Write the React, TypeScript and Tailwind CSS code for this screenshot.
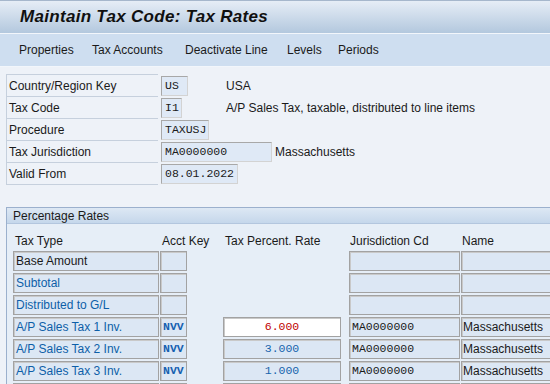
import React from 'react';

type Rate = {
  type: string;
  dark?: boolean;
  key?: string;
  rate?: string;
  current?: boolean;
  jur?: string;
  name?: string;
  hasRate?: boolean;
};

const rates: Rate[] = [
  { type: 'Base Amount', dark: true },
  { type: 'Subtotal' },
  { type: 'Distributed to G/L' },
  { type: 'A/P Sales Tax 1 Inv.', key: 'NVV', rate: '6.000', current: true, jur: 'MA0000000', name: 'Massachusetts', hasRate: true },
  { type: 'A/P Sales Tax 2 Inv.', key: 'NVV', rate: '3.000', jur: 'MA0000000', name: 'Massachusetts', hasRate: true },
  { type: 'A/P Sales Tax 3 Inv.', key: 'NVV', rate: '1.000', jur: 'MA0000000', name: 'Massachusetts', hasRate: true },
  // next row only peeks in at the bottom edge
  { type: '', hasRate: true },
];

const header = [
  { label: 'Country/Region Key', value: 'US', w: 'w-[27px]', text: 'USA' },
  { label: 'Tax Code', value: 'I1', w: 'w-[21px]', text: 'A/P Sales Tax, taxable, distributed to line items' },
  { label: 'Procedure', value: 'TAXUSJ', w: 'w-[48px]' },
  { label: 'Tax Jurisdiction', value: 'MA0000000', w: 'w-[111px]', text: 'Massachusetts', near: true },
  { label: 'Valid From', value: '08.01.2022', w: 'w-[77px]' },
];

const menu = [
  { t: 'Properties', w: 'w-[73px]' },
  { t: 'Tax Accounts', w: 'w-[93px]' },
  { t: 'Deactivate Line', w: 'w-[102px]' },
  { t: 'Levels', w: 'w-[51px]' },
  { t: 'Periods', w: '' },
];

const mono = "font-['Liberation_Mono','Courier_New',monospace] text-[11.5px]";
const cell = 'shrink-0 h-[20px] border border-[#a2a2a2] shadow-[inset_1px_1px_0_#c9c9c9] bg-[#dce7f4] flex items-center';

const App = () => {
  return (
    <div className="w-[550px] h-[384px] overflow-hidden bg-[#eef2f8] font-['Liberation_Sans',Arial,sans-serif] text-[12px] text-[#1a1a1a]">
      <div className="h-[33px] border-t border-[#a6b7cc] bg-gradient-to-b from-[#e6edf6] to-[#b3c8de] pl-[20px] flex items-center">
        <h1 className="text-[17px] font-bold italic text-[#101010] tracking-[0.3px]">Maintain Tax Code: Tax Rates</h1>
      </div>

      <div className="h-[34px] border-t border-[#f2f6fb] border-b border-[#a9b7c8] bg-[#cedef0] pl-[19px] flex items-center">
        {menu.map(m => (
          <span key={m.t} className={`shrink-0 ${m.w}`}>{m.t}</span>
        ))}
      </div>

      <div className="ml-[6px] mt-[7px] border-l border-b border-[#c6d0dd] w-[152px]">
        {header.map(h => (
          <div key={h.label} className="relative h-[22px] flex items-center border-t border-[#c6d0dd] pl-[2px]">
            {h.label}
            <div className="absolute left-[154px] top-[1px] flex items-center h-[20px] whitespace-nowrap">
              <div className={`${h.w} h-[20px] border border-[#a8a8a8] border-r-[#d3d3d3] border-b-[#d3d3d3] bg-[#dfe9f6] flex items-center pl-[3px] ${mono}`}>
                {h.value}
              </div>
              {h.text && <span className={h.near ? 'ml-[3px]' : 'absolute left-[65px]'}>{h.text}</span>}
            </div>
          </div>
        ))}
      </div>

      <div className="ml-[6px] mt-[22px] border-t border-l border-[#9bb0cd] bg-[#e6eef7]">
        <div className="h-[16px] bg-gradient-to-b from-[#dde8f4] to-[#c5d7eb] border-b border-[#b3c6de] pl-[6px] flex items-center">
          Percentage Rates
        </div>
        <div className="h-[27px] pt-[6px] flex items-center pl-[8px] whitespace-nowrap">
          <span className="shrink-0 w-[147px]">Tax Type</span>
          <span className="shrink-0 w-[63px]">Acct Key</span>
          <span className="shrink-0 w-[125px]">Tax Percent. Rate</span>
          <span className="shrink-0 w-[112px]">Jurisdiction Cd</span>
          <span>Name</span>
        </div>
        {rates.map((r, i) => (
          <div key={i} className="h-[22px] flex pl-[6px]">
            <div className={`${cell} w-[146px] pl-[2px] ${r.dark ? 'text-[#1a1a1a]' : 'text-[#0d5fa8]'}`}>{r.type}</div>
            <div className={`${cell} w-[27px] ml-[1px] pl-[2px] ${mono} font-bold text-[#1660b0]`}>{r.key}</div>
            {r.hasRate ? (
              <div
                className={`${cell} w-[118px] ml-[36px] justify-center ${mono} ${
                  r.current ? 'bg-white text-[#c00000]' : 'text-[#1664ad]'
                }`}
              >
                {r.rate}
              </div>
            ) : (
              <div className="shrink-0 w-[118px] ml-[36px]" />
            )}
            <div className={`${cell} w-[111px] ml-[8px] pl-[2px] ${mono}`}>{r.jur}</div>
            <div className={`${cell} w-[100px] ml-[1px] pl-[1px] whitespace-nowrap`}>{r.name}</div>
          </div>
        ))}
      </div>
    </div>
  );
};

export default App;
